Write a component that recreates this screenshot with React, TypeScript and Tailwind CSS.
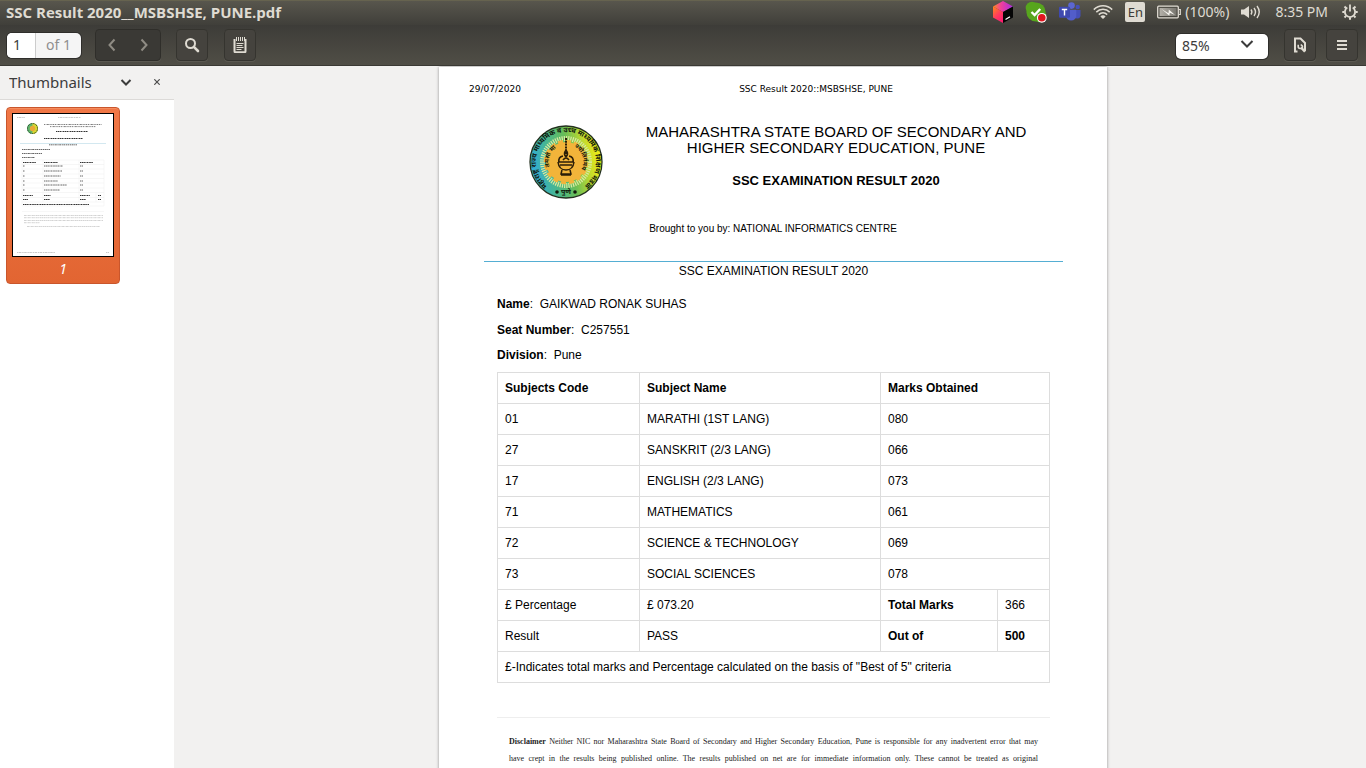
import type { ReactNode } from "react";

const subjects = [
  { code: "01", name: "MARATHI (1ST LANG)", marks: "080" },
  { code: "27", name: "SANSKRIT (2/3 LANG)", marks: "066" },
  { code: "17", name: "ENGLISH (2/3 LANG)", marks: "073" },
  { code: "71", name: "MATHEMATICS", marks: "061" },
  { code: "72", name: "SCIENCE & TECHNOLOGY", marks: "069" },
  { code: "73", name: "SOCIAL SCIENCES", marks: "078" },
];

function CubeIcon() {
  return (
    <svg width="20" height="22" viewBox="0 0 20 22" aria-hidden="true">
      <defs>
        <linearGradient id="cubeTop" x1="0" y1="0.5" x2="1" y2="0.5">
          <stop offset="0" stopColor="#ff8a1e" />
          <stop offset="0.4" stopColor="#f0409a" />
          <stop offset="1" stopColor="#a92be0" />
        </linearGradient>
        <linearGradient id="cubeLeft" x1="0" y1="0" x2="0.6" y2="1">
          <stop offset="0" stopColor="#ff8a1a" />
          <stop offset="0.6" stopColor="#ff3a5f" />
          <stop offset="1" stopColor="#ff1d6e" />
        </linearGradient>
      </defs>
      <path d="M10 0L20 5.5L10 11L0 5.5Z" fill="url(#cubeTop)" />
      <path d="M0 5.5L10 11V22L0 16.5Z" fill="url(#cubeLeft)" />
      <path d="M20 5.5L10 11V22L20 16.5Z" fill="#050505" />
      <path d="M12.5 18.5L17 15.8" stroke="#fff" strokeWidth="1.3" />
    </svg>
  );
}

function SkypeIcon() {
  return (
    <svg width="22" height="22" viewBox="0 0 22 22" aria-hidden="true">
      <circle cx="7" cy="7" r="6.3" fill="#57a51d" />
      <circle cx="15" cy="15" r="6.3" fill="#57a51d" />
      <circle cx="11" cy="11" r="9.6" fill="#57a51d" />
      <path d="M6.5 11L9.6 14L15.2 8" fill="none" stroke="#fff" strokeWidth="2.4" />
      <circle cx="16.8" cy="16.8" r="4.9" fill="#fff" />
      <circle cx="16.8" cy="16.8" r="3.8" fill="#e0161f" />
    </svg>
  );
}

function TeamsIcon() {
  return (
    <svg width="22" height="20" viewBox="0 0 22 20" aria-hidden="true">
      <circle cx="18.7" cy="5" r="2.2" fill="#454fb8" />
      <path d="M15 8h6.500v5.200a3.300 3.300 0 0 1-6.500.8Z" fill="#454fb8" />
      <circle cx="12.500" cy="3.600" r="3.300" fill="#5b66d2" />
      <path d="M7 7.700h10.300v6.400a5.200 5.200 0 0 1-10.300 0Z" fill="#525dca" />
      <rect x="0" y="4.700" width="11" height="11" rx="1" fill="#3f49b0" />
      <path d="M2.800 7.500h5.400M5.500 7.500v6" stroke="#fff" strokeWidth="1.400" />
    </svg>
  );
}

function WifiIcon() {
  return (
    <svg width="20" height="16" viewBox="0 0 20 16" fill="none" stroke="#dfdbd2" strokeWidth="1.500" aria-hidden="true">
      <path d="M0.800 5.600C6 0.400 14 0.400 19.200 5.600" />
      <path d="M3.300 8.100C7 4.400 13 4.400 16.700 8.100" />
      <path d="M5.800 10.600C8.200 8.200 11.800 8.200 14.200 10.600" />
      <path d="M7.400 12.400C8.900 11 11.100 11 12.600 12.400L10 15Z" fill="#dfdbd2" stroke="none" />
    </svg>
  );
}

function BatteryIcon() {
  return (
    <svg width="24" height="14" viewBox="0 0 24 14" aria-hidden="true">
      <defs>
        <linearGradient id="charge" x1="0" y1="0" x2="1" y2="0">
          <stop offset="0" stopColor="#b5b2aa" />
          <stop offset="1" stopColor="#77756e" />
        </linearGradient>
      </defs>
      <rect x="0.700" y="1.200" width="20.600" height="11.600" rx="1" fill="none" stroke="#dfdbd2" strokeWidth="1.300" />
      <rect x="2.500" y="3" width="17" height="8" fill="url(#charge)" />
      <path d="M22 4.500h1.300v5H22" fill="none" stroke="#dfdbd2" strokeWidth="1.200" />
      <path d="M4.500 4L11.500 8.200L11.800 4.500L18 10L12.800 7.800L12.300 10.800Z" fill="#f6f4ef" />
    </svg>
  );
}

function VolumeIcon() {
  return (
    <svg width="20" height="14" viewBox="0 0 20 14" fill="none" stroke="#dfdbd2" strokeWidth="1.400" aria-hidden="true">
      <path d="M0 4.500h3L8 1v12L3 9.500H0Z" fill="#dfdbd2" stroke="none" />
      <path d="M10 4.500Q11.800 7 10 9.500" />
      <path d="M13 3Q16 7 13 11" />
      <path d="M16 1Q20.500 7 16 13" />
    </svg>
  );
}

function PowerIcon() {
  return (
    <svg width="16" height="16" viewBox="0 0 16 16" fill="none" stroke="#dfdbd2" aria-hidden="true">
      <path d="M5.300 3.600A5.100 5.100 0 1 0 10.700 3.600" strokeWidth="1.800" />
      <path d="M8 0.500V7.500" strokeWidth="1.800" />
      <path d="M0.300 8h2.200M13.500 8h2.200M8 13.500v2.200M2.500 2.500l1.600 1.600M13.500 2.500l-1.600 1.600M2.500 13.500l1.600-1.600M13.500 13.500l-1.600-1.600" strokeWidth="2" />
    </svg>
  );
}

function Chevron({ d, color }: { d: string; color: string }) {
  return (
    <svg width="14" height="14" viewBox="0 0 14 14" fill="none" stroke={color} strokeWidth="2" aria-hidden="true">
      <path d={d} />
    </svg>
  );
}

function ToolButton({ label, children }: { label: string; children: ReactNode }) {
  return (
    <button
      type="button"
      aria-label={label}
      className="flex size-8 items-center justify-center rounded border border-[#35342f] bg-[#45433e] shadow-[0_1px_0_#5b5951]"
    >
      {children}
    </button>
  );
}

function Emblem() {
  return (
    <svg width="74" height="76" viewBox="0 0 74 76" role="img" aria-label="Maharashtra State Board emblem" className="shrink-0">
      <defs>
        <linearGradient id="rim" x1="0" y1="0.600" x2="1" y2="0.400">
          <stop offset="0" stopColor="#2fa9e0" />
          <stop offset="0.250" stopColor="#43b59a" />
          <stop offset="0.550" stopColor="#67bd58" />
          <stop offset="0.800" stopColor="#c5dc2c" />
          <stop offset="1" stopColor="#f8ee12" />
        </linearGradient>
        <path id="rimText" d="M22.500 64.400A30 30 0 1 1 51.500 64.400" />
        <path id="leftText" d="M25 50A17 17 0 0 1 35 21" />
        <path id="rightText" d="M40 21A17 17 0 0 1 49 50" />
      </defs>
      <circle cx="37" cy="38" r="36" fill="url(#rim)" stroke="#23301f" strokeWidth="1.300" />
      <circle cx="37" cy="38" r="23.500" fill="none" stroke="#d9e9a0" strokeWidth="5" strokeDasharray="1.200 1" />
      <circle cx="37" cy="38" r="20" fill="#f2b43a" />
      <circle cx="37" cy="38" r="20.500" fill="none" stroke="#f2b43a" strokeWidth="3.500" strokeDasharray="5 3" />
      <g fill="#10180c" fontFamily="'Noto Sans', 'Noto Sans Devanagari', 'FreeSans', sans-serif" fontWeight="700">
        <text fontSize="7" textAnchor="middle">
          <textPath href="#rimText" startOffset="50%">महाराष्ट्र राज्य माध्यमिक व उच्च माध्यमिक शिक्षण मंडळ</textPath>
        </text>
        <text x="37" y="70" fontSize="7" textAnchor="middle">पुणे</text>
        <text fontSize="6" textAnchor="middle">
          <textPath href="#leftText" startOffset="50%">तमसो मा</textPath>
        </text>
        <text fontSize="6" textAnchor="middle">
          <textPath href="#rightText" startOffset="50%">ज्योतिर्गमय</textPath>
        </text>
      </g>
      <circle cx="28" cy="68" r="1.800" fill="#10180c" />
      <circle cx="46" cy="68" r="1.800" fill="#10180c" />
      <path d="M37 14v18" stroke="#2c1e08" strokeWidth="2" strokeDasharray="2 0.800" />
      <g fill="none" stroke="#2c1e08" strokeWidth="1.500">
        <path d="M37 26q-3 4 0 7q3-3 0-7" />
        <path d="M30 38q-1-5 4-6M44 38q1-5-4-6M29 38h16M31 41h12M34 36q3-4 6 0" />
        <path d="M29 38q1 8 8 8q7 0 8-8" />
        <path d="M33 46l-1 4h10l-1-4M32 51h10" />
      </g>
    </svg>
  );
}

function Thumbnail() {
  const widths = [19, 18, 17, 14, 23, 16];
  const rows = [52, 57, 62, 67, 71, 76];
  return (
    <svg viewBox="0 0 100 142" className="block w-full bg-white" role="img" aria-label="Page 1 preview">
      <g stroke="#a8a8a8" strokeWidth="0.600" strokeDasharray="1.500 0.500 2.500 0.700">
        <path d="M4 3.500h8M45 3.500h23M4 138.500h38M93 138.500h3" />
      </g>
      <circle cx="19.500" cy="14.500" r="5.500" fill="#5fb66d" />
      <path d="M19.500 9a5.500 5.500 0 0 1 0 11" fill="#d8d931" />
      <circle cx="19.500" cy="14.500" r="5" fill="none" stroke="#263428" strokeDasharray="1 0.800" />
      <circle cx="19.500" cy="14.500" r="2.700" fill="#e9a938" />
      <g stroke="#808080" strokeWidth="1" strokeDasharray="1.200 0.600 0.700 0.500 1.800 0.700">
        <path d="M31 10.500h58M37 12.600h46" />
      </g>
      <g stroke="#333" strokeWidth="1" strokeDasharray="1.500 0.500 1 0.500">
        <path d="M43 17.500h32M31 24.500h39" />
      </g>
      <path d="M7 29.500h86" stroke="#c8e2ec" strokeWidth="0.800" />
      <g stroke="#555" strokeWidth="0.900" strokeDasharray="1.300 0.500 1.800 0.600">
        <path d="M36 30.800h28M9 35.500h28M9 39.500h20M9 43.500h13" />
      </g>
      <g stroke="#ececec" strokeWidth="0.500" fill="none">
        <path d="M9 46h82v46H9ZM30 46v42M66 46v42M83 79v9M9 50.500h82M9 55h82M9 60h82M9 64.500h82M9 69h82M9 74h82M9 78.500h82M9 83.500h82M9 88h82" />
      </g>
      <g stroke="#333" strokeWidth="1" strokeDasharray="1.500 0.500 1 0.400">
        <path d="M10 48.500h13M31 48.500h14M67 48.500h13M10 81.500h10M31 81.500h7M67 81.500h10M85 81.500h3M10 85.500h5M31 85.500h6M67 85.500h6M85 85.500h3M10 90.500h66" />
        {rows.map((y, i) => (
          <path key={y} d={`M10 ${y}h2M31 ${y}h${widths[i]}M67 ${y}h3`} stroke="#555" strokeWidth="0.900" />
        ))}
      </g>
      <path d="M9 97.500h82" stroke="#eee" strokeWidth="0.500" />
      <g stroke="#b5b5b5" strokeWidth="0.600" strokeDasharray="2 0.400 1 0.500">
        <path d="M11 101.500h79M11 103.700h79M11 106.500h79M11 108.700h16M14 112.500h73" />
      </g>
    </svg>
  );
}

const cell = "border border-[#dddddd] px-[7px] text-left";

export default function App() {
  return (
    <div className="flex h-screen flex-col overflow-hidden bg-[#f2f1f0] font-['Noto_Sans',sans-serif] text-[#3c3c3c]">
      <header className="flex h-[25px] shrink-0 items-center justify-between border-t border-[#66634f] bg-linear-to-b from-[#58564d] to-[#403f3a] pb-[3px] pl-1.5 pr-2 text-[#dfdbd2]">
        <h1 className="font-['Open_Sans',sans-serif] text-[15px] font-bold leading-5">SSC Result 2020__MSBSHSE, PUNE.pdf</h1>
        <div className="flex items-center gap-3 text-sm leading-5">
          <CubeIcon />
          <SkypeIcon />
          <TeamsIcon />
          <WifiIcon />
          <span className="flex size-5 items-center justify-center rounded-xs bg-[#dfdbd2] text-[13px] text-[#3c3b37]">En</span>
          <span className="flex items-center gap-1">
            <BatteryIcon />
            (100%)
          </span>
          <VolumeIcon />
          <time className="px-0.5">8:35 PM</time>
          <PowerIcon />
        </div>
      </header>

      <div className="flex h-[41px] shrink-0 items-center justify-between border-b border-[#3a3934] bg-linear-to-b from-[#3d3c38] to-[#504e46] pl-[7px] pr-2" role="toolbar" aria-label="Document">
        <div className="flex items-center">
          <label className="flex h-[25px] w-[74px] overflow-hidden rounded-[5px] bg-[#f5f5f5] text-sm shadow-[0_0_0_1px_#2f2e2b]">
            <input aria-label="Page number" defaultValue="1" className="w-[29px] border-r border-[#cccccc] bg-white pl-1.5 outline-none" />
            <span className="flex flex-1 items-center justify-center text-[#8f8f8f]">of 1</span>
          </label>
          <div className="ml-3.5 flex h-8 w-[66px] rounded border border-[#2f2e2a] bg-[#3a3935] shadow-[0_1px_0_#5b5951]">
            <button type="button" aria-label="Previous page" className="flex flex-1 items-center justify-center">
              <Chevron d="M9.500 1.500L4.500 7L9.500 12.500" color="#8f8c84" />
            </button>
            <button type="button" aria-label="Next page" className="flex flex-1 items-center justify-center">
              <Chevron d="M4.500 1.500L9.500 7L4.500 12.500" color="#8f8c84" />
            </button>
          </div>
          <div className="ml-[15px] flex gap-4">
            <ToolButton label="Find">
              <svg width="16" height="16" viewBox="0 0 16 16" fill="none" stroke="#dfdbd2" aria-hidden="true">
                <circle cx="6.500" cy="6.500" r="4.500" strokeWidth="2" />
                <path d="M9.800 9.800L14 14" strokeWidth="2.600" strokeLinecap="round" />
              </svg>
            </ToolButton>
            <ToolButton label="Annotate">
              <svg width="14" height="16" viewBox="0 0 14 16" fill="none" stroke="#dfdbd2" aria-hidden="true">
                <path d="M1.500 2v12.200a1 1 0 0 0 1 1h9a1 1 0 0 0 1-1V2" strokeWidth="2" />
                <path d="M3.500 0v4M5.500 0v4M7.500 0v4M9.500 0v4M11.500 0v4" strokeWidth="1" />
                <path d="M3.500 6.500h7M3.500 8.500h6M3.500 10.500h7M3.500 12.500h5" strokeWidth="1" />
              </svg>
            </ToolButton>
          </div>
        </div>
        <div className="flex items-center">
          <div className="relative mr-4 h-[25px] w-[92px]">
            <select aria-label="Zoom" className="size-full appearance-none rounded-[5px] bg-white pb-0.5 pl-1.5 text-sm text-[#3c3c3c] shadow-[0_0_0_1px_#2f2e2b]">
              <option>85%</option>
            </select>
            <span className="pointer-events-none absolute inset-y-0 right-3.5 flex items-center">
              <Chevron d="M1.500 3L7 8.500L12.500 3" color="#3c3c3c" />
            </span>
          </div>
          <div className="flex gap-2.5">
            <ToolButton label="Document properties">
              <svg width="14" height="16" viewBox="0 0 14 16" fill="none" stroke="#dfdbd2" aria-hidden="true">
                <path d="M4.500 14.500H2V1.500h5.500L12 6V14" strokeWidth="2" />
                <path d="M5.200 7.800v1.700a2 2 0 0 0 2 2H8.300a2 2 0 0 0 1-2.500L7.800 7.500" strokeWidth="1.600" />
                <path d="M8 10.500L12 14.800" strokeWidth="2.400" />
              </svg>
            </ToolButton>
            <ToolButton label="Menu">
              <svg width="10" height="12" viewBox="0 0 10 12" stroke="#dfdbd2" strokeWidth="2" aria-hidden="true">
                <path d="M0 2h10M0 6h10M0 10h10" />
              </svg>
            </ToolButton>
          </div>
        </div>
      </div>

      <div className="flex min-h-0 flex-1">
        <aside className="flex w-[174px] shrink-0 flex-col">
          <div className="flex h-[34px] shrink-0 items-center border-b border-[#dcdad8] pb-0.5 pl-[9px] pr-[11px]">
            <div className="relative flex-1">
              <select aria-label="Side pane" className="w-full appearance-none bg-transparent text-[15px]">
                <option>Thumbnails</option>
              </select>
              <span className="pointer-events-none absolute inset-y-0 right-[18px] flex items-center">
                <Chevron d="M2.500 5L7 9.500L11.500 5" color="#3c3c3c" />
              </span>
            </div>
            <button type="button" aria-label="Close side pane" className="flex size-3 items-center justify-center">
              <svg width="6" height="6" viewBox="0 0 6 6" stroke="#4c4c4c" aria-hidden="true">
                <path d="M0.300 0.300L5.700 5.700M5.700 0.300L0.300 5.700" strokeWidth="1.200" />
              </svg>
            </button>
          </div>
          <div className="flex-1 bg-white px-1.5 pt-[7px]">
            <button type="button" className="block w-[114px] rounded border border-[#c9562c] bg-linear-to-b from-[#f07746] to-[#e26532] px-[5px] pb-1 pt-[5px] shadow-[inset_0_1px_0_#f58c5e]">
              <span className="block border border-black">
                <Thumbnail />
              </span>
              <span className="block pt-0.5 text-sm italic leading-5 text-white">1</span>
            </button>
          </div>
        </aside>

        <main className="flex-1 overflow-y-auto pl-1.5 pt-px [scrollbar-width:none]">
          <article className="mx-auto min-h-[945px] w-[668px] bg-white px-[30px] pt-4 font-['Liberation_Sans',sans-serif] text-xs text-black shadow-[0_0_3px_#00000066]">
            <div className="grid grid-cols-[1fr_auto_1fr] font-['DejaVu_Sans',sans-serif] text-[9px] leading-3">
              <span>29/07/2020</span>
              <span className="pl-[86px]">SSC Result 2020::MSBSHSE, PUNE</span>
            </div>
            <div className="flex pl-[60px] pr-[16px] pt-[29px]">
              <Emblem />
              <div className="flex-1 pl-[8px] text-center">
                <h2 className="text-[15px] leading-4">
                  MAHARASHTRA STATE BOARD OF SECONDARY AND
                  <br />
                  HIGHER SECONDARY EDUCATION, PUNE
                </h2>
                <p className="pt-[17px] text-[13px] font-bold leading-4">SSC EXAMINATION RESULT 2020</p>
              </div>
            </div>
            <p className="pt-[21px] text-center text-[10px] leading-4">Brought to you by: NATIONAL INFORMATICS CENTRE</p>
            <section className="ml-[15px] mr-[14px] mt-6 border-t border-[#55aed3] px-[13px]">
              <h3 className="pt-px text-center leading-4">SSC EXAMINATION RESULT 2020</h3>
              <div className="pb-[5px] pt-3 leading-[26px]">
                <p><b>Name</b>:&nbsp; GAIKWAD RONAK SUHAS</p>
                <p><b>Seat Number</b>:&nbsp; C257551</p>
                <p className="leading-6"><b>Division</b>:&nbsp; Pune</p>
              </div>
              <table className="w-full table-fixed border-collapse">
                <colgroup>
                  <col className="w-[142px]" />
                  <col className="w-[241px]" />
                  <col className="w-[117px]" />
                  <col />
                </colgroup>
                <thead>
                  <tr className="h-[31px]">
                    <th className={cell}>Subjects Code</th>
                    <th className={cell}>Subject Name</th>
                    <th className={cell} colSpan={2}>Marks Obtained</th>
                  </tr>
                </thead>
                <tbody>
                  {subjects.map((s) => (
                    <tr key={s.code} className="h-[31px]">
                      <td className={cell}>{s.code}</td>
                      <td className={cell}>{s.name}</td>
                      <td className={cell} colSpan={2}>{s.marks}</td>
                    </tr>
                  ))}
                  <tr className="h-[31px]">
                    <td className={cell}>£ Percentage</td>
                    <td className={cell}>£ 073.20</td>
                    <th className={cell}>Total Marks</th>
                    <td className={cell}>366</td>
                  </tr>
                  <tr className="h-[31px]">
                    <td className={cell}>Result</td>
                    <td className={cell}>PASS</td>
                    <th className={cell}>Out of</th>
                    <th className={cell}>500</th>
                  </tr>
                  <tr className="h-[31px]">
                    <td className={cell} colSpan={4}>
                      £-Indicates total marks and Percentage calculated on the basis of "Best of 5" criteria
                    </td>
                  </tr>
                </tbody>
              </table>
              <div className="mt-[34px] border-t border-[#eeeeee] px-3 pt-[15px]">
                <p className="text-justify font-['Liberation_Serif',serif] text-[8px] leading-[17px] text-[#222222] [text-align-last:justify]">
                  <b>Disclaimer</b> Neither NIC nor Maharashtra State Board of Secondary and Higher Secondary Education, Pune is responsible for any inadvertent error that may
                  <br />
                  have crept in the results being published online. The results published on net are for immediate information only. These cannot be treated as original
                </p>
              </div>
            </section>
          </article>
        </main>
      </div>
    </div>
  );
}
